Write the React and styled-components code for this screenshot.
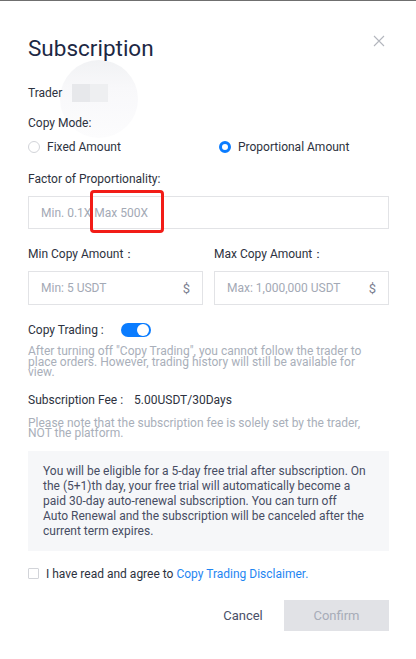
import React from 'react';
import styled, { createGlobalStyle } from 'styled-components';

const GlobalStyle = createGlobalStyle`
    html, body {
        margin: 0;
        padding: 0;
        background: #fff;
    }
    body {
        font-family: Roboto, "Liberation Sans", Arial, sans-serif;
        -webkit-font-smoothing: antialiased;
    }
`;

const Modal = styled.div`
    position: relative;
    box-sizing: border-box;
    width: 416px;
    min-height: 659px;
    border-top: 1px solid #6f6f6f;
    padding: 34px 27px 0 28px;
    background: #fff;
    color: #2d3240;
    font-size: 12px;
    overflow: hidden;
`;

const Title = styled.h1`
    margin: 0;
    font-size: 22.5px;
    line-height: 26px;
    font-weight: 400;
    color: #1d2844;
`;

const Close = styled.button`
    position: absolute;
    top: 33px;
    right: 30px;
    width: 14px;
    height: 14px;
    padding: 0;
    border: 0;
    background: none;
    cursor: pointer;
`;

const AvatarGhost = styled.div`
    position: absolute;
    top: 59px;
    left: 60px;
    width: 78px;
    height: 78px;
    border-radius: 50%;
    background: linear-gradient(#f1f2f4 0%, #f8f8fa 35%, #fcfcfd 100%);
    z-index: 0;
`;

const Content = styled.div`
    position: relative;
    z-index: 1;
`;

const Row = styled.div`
    display: flex;
    align-items: center;
    gap: ${p => p.gap || 0}px;
    margin-top: ${p => p.mt || 0}px;
    line-height: 18px;
`;

const Label = styled.div`
    margin-top: ${p => p.mt || 0}px;
    line-height: 18px;
    color: #2d3240;
`;

const Placeholder = styled.div`
    display: flex;
    width: 36px;
    height: 18px;
    margin-left: 10px;
    span {
        flex: 1;
        background: #e7e8eb;
    }
    span + span {
        background: #eeeff1;
    }
`;

const RadioGroup = styled.div`
    display: grid;
    grid-template-columns: 191px 1fr;
    margin-top: 6px;
    line-height: 18px;
`;

const RadioOption = styled.label`
    display: flex;
    align-items: center;
    gap: 7px;
    color: #2d3240;
`;

const RadioDot = styled.span`
    box-sizing: border-box;
    width: 12px;
    height: 12px;
    border-radius: 50%;
    border: ${p => (p.checked ? '3.5px solid #0a7cff' : '1px solid #d2d4d9')};
    background: #fff;
`;

const Field = styled.div`
    position: relative;
    box-sizing: border-box;
    display: flex;
    align-items: center;
    height: ${p => p.h || 33}px;
    margin-top: 8px;
    padding: 0 12px;
    border: 1px solid #e2e3e6;
    color: #a3a9b5;
`;

const Suffix = styled.span`
    margin-left: auto;
    color: #7b8090;
    font-size: 13px;
`;

const Highlight = styled.div`
    position: absolute;
    top: -7px;
    left: 61px;
    width: 68px;
    height: 37px;
    border: 3px solid #f21c17;
    border-radius: 4px;
`;

const TwoCols = styled.div`
    display: grid;
    grid-template-columns: 175px 175px;
    column-gap: 11px;
    margin-top: 16px;
`;

const Toggle = styled.span`
    position: relative;
    width: 30px;
    height: 14px;
    border-radius: 7px;
    background: #0a7cff;
    &::after {
        content: '';
        position: absolute;
        top: 1px;
        right: 2px;
        width: 12px;
        height: 12px;
        border-radius: 50%;
        background: #fff;
    }
`;

const Hint = styled.p`
    margin: ${p => p.mt || 0}px 0 0;
    padding-right: 18px;
    font-size: 12px;
    line-height: 10.5px;
    color: #a9afba;
`;

const FeeValue = styled.span`
    margin-left: 11px;
`;

const TrialBox = styled.div`
    margin-top: 12px;
    padding: 13px 21px 11px 15px;
    background: #f6f7f9;
    color: #474d63;
    line-height: 15.2px;
`;

const NoWrap = styled.span`
    white-space: nowrap;
`;

const Check = styled.span`
    box-sizing: border-box;
    width: 11px;
    height: 11px;
    border: 1px solid #d2d4d9;
    border-radius: 1px;
    background: #fff;
`;

const Link = styled.a`
    color: #1f86f2;
    text-decoration: none;
`;

const Footer = styled.div`
    display: flex;
    justify-content: flex-end;
    align-items: center;
    gap: 11px;
    margin-top: 17px;
`;

const CancelButton = styled.button`
    width: 60px;
    height: 31px;
    padding: 0;
    border: 0;
    background: none;
    font: inherit;
    font-size: 13px;
    color: #4a5068;
`;

const ConfirmButton = styled.button`
    width: 105px;
    height: 31px;
    padding: 0;
    border: 0;
    background: #e1e2e6;
    font: inherit;
    font-size: 13px;
    color: #a7acb8;
`;

export default function App() {
    return (
        <>
            <GlobalStyle />
            <Modal>
                <AvatarGhost />
                <Close aria-label="close">
                    <svg width="14" height="14" viewBox="0 0 14 14">
                        <path d="M2 2 L12 12 M12 2 L2 12" stroke="#b3b6bd" strokeWidth="1.1" />
                    </svg>
                </Close>
                <Content>
                    <Title>Subscription</Title>
                    <Row mt={23}>
                        Trader
                        <Placeholder><span /><span /></Placeholder>
                    </Row>
                    <Label mt={12}>Copy Mode:</Label>
                    <RadioGroup>
                        <RadioOption><RadioDot />Fixed Amount</RadioOption>
                        <RadioOption><RadioDot checked />Proportional Amount</RadioOption>
                    </RadioGroup>
                    <Label mt={14}>Factor of Proportionality:</Label>
                    <Field>
                        Min. 0.1X Max 500X
                        <Highlight />
                    </Field>
                    <TwoCols>
                        <div>
                            <Label>Min Copy Amount：</Label>
                            <Field h={34}>Min: 5 USDT<Suffix>$</Suffix></Field>
                        </div>
                        <div>
                            <Label>Max Copy Amount：</Label>
                            <Field h={34}>Max: 1,000,000 USDT<Suffix>$</Suffix></Field>
                        </div>
                    </TwoCols>
                    <Row mt={16} gap={17}>
                        Copy Trading :
                        <Toggle />
                    </Row>
                    <Hint mt={7}>
                        After turning off "Copy Trading", you cannot follow the trader to place orders. However, trading history will still be available for view.
                    </Hint>
                    <Row mt={13}>
                        Subscription Fee :
                        <FeeValue>5.00USDT/30Days</FeeValue>
                    </Row>
                    <Hint mt={9}>
                        Please note that the subscription fee is solely set by the trader, NOT the platform.
                    </Hint>
                    <TrialBox>
                        You will be eligible for a 5-day free trial after subscription. On the (5+1)th day, your free trial will automatically become a paid 30-day auto-renewal subscription. You can turn off <NoWrap>Auto Renewal</NoWrap> and the subscription will be canceled after the current term expires.
                    </TrialBox>
                    <Row mt={14} gap={7}>
                        <Check />
                        <span>I have read and agree to <Link href="#">Copy Trading Disclaimer.</Link></span>
                    </Row>
                    <Footer>
                        <CancelButton>Cancel</CancelButton>
                        <ConfirmButton>Confirm</ConfirmButton>
                    </Footer>
                </Content>
            </Modal>
        </>
    );
}
